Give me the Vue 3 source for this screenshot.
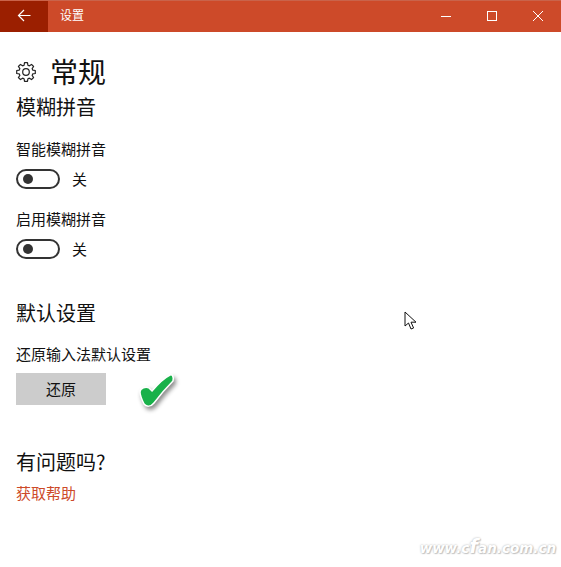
<template>
  <div class="window">
    <!-- title bar -->
    <header class="titlebar">
      <button class="back">
        <svg width="16" height="16" viewBox="0 0 16 16" fill="none" stroke="#fff" stroke-width="1.2">
          <path d="M14.500 7.500H2.500M8 2 2.500 7.500 8 13" />
        </svg>
      </button>
      <span class="title">设置</span>
      <div class="controls">
        <span class="ctl">
          <svg width="12" height="12" viewBox="0 0 12 12"><path d="M1 6.500h10" stroke="#fff" stroke-width="1" /></svg>
        </span>
        <span class="ctl">
          <svg width="12" height="12" viewBox="0 0 12 12"><rect x="1.500" y="1.500" width="9" height="9" fill="none" stroke="#fff" stroke-width="1" /></svg>
        </span>
        <span class="ctl">
          <svg width="12" height="12" viewBox="0 0 12 12"><path d="M1 1l10 10M11 1 1 11" stroke="#fff" stroke-width="1" /></svg>
        </span>
      </div>
    </header>

    <main class="content">
      <div class="page-head">
        <svg class="gear" width="20" height="20" viewBox="0 0 20 20" fill="none" stroke="#222" stroke-width="1.2">
          <path :d="gearPath" stroke-linejoin="round" />
          <circle cx="10" cy="10" r="3.300" />
        </svg>
        <h1>常规</h1>
      </div>

      <h2 class="first">模糊拼音</h2>
      <div v-for="item in toggles" :key="item" class="setting">
        <div class="label">{{ item }}</div>
        <div class="toggle-row">
          <span class="toggle"><i></i></span>
          <span class="state">关</span>
        </div>
      </div>

      <h2 class="defaults">默认设置</h2>
      <div class="label reset-label">还原输入法默认设置</div>
      <button class="reset">还原</button>

      <h2 class="help">有问题吗?</h2>
      <a class="link">获取帮助</a>
    </main>

    <!-- annotations on top of the screenshot -->
    <svg class="check" width="40" height="40" viewBox="0 0 40 40">
      <path d="M3 20C3 16 9 14 12 16L15 19C20 13 27 6 33 3 35 2 37 4 36 9 30 15 23 23 17 31 14 35 9 35 7 32 5 28 3 24 3 20Z" fill="#19b14a" stroke="#fff" stroke-width="1.500" />
    </svg>
    <svg class="cursor" width="14" height="20" viewBox="0 0 14 20">
      <path d="M1 1v14l3.500-3 2.500 6 2.600-1-2.600-5.800h5z" fill="#fff" stroke="#111" stroke-width="1" />
    </svg>
    <div class="watermark">www.c<span>f</span>an.com.cn</div>
  </div>
</template>

<script setup>
const toggles = ["智能模糊拼音", "启用模糊拼音"];

// 8-tooth gear outline
const gearPath = (() => {
  const pts = [];
  for (let i = 0; i < 8; i++) {
    const a = (i * Math.PI) / 4 - Math.PI / 2;
    const step = Math.PI / 4;
    const p = (r, t) => `${(10 + r * Math.cos(t)).toFixed(2)} ${(10 + r * Math.sin(t)).toFixed(2)}`;
    pts.push(`${i ? "L" : "M"}${p(9.4, a - step * 0.2)}`);
    pts.push(`L${p(9.4, a + step * 0.2)}`);
    pts.push(`L${p(7, a + step * 0.36)}`);
    pts.push(`L${p(7, a + step * 0.64)}`);
  }
  return pts.join(" ") + "Z";
})();
</script>

<style>
html,
body {
  margin: 0;
  background: #fff;
}
</style>

<style scoped>
.window {
  position: relative;
  width: 561px;
  height: 567px;
  overflow: hidden;
  background: #fff;
  color: #111;
  font-family: "Noto Sans CJK SC", "Liberation Sans", sans-serif;
}

.titlebar {
  display: flex;
  align-items: center;
  height: 32px;
  box-sizing: border-box;
  border-top: 1px solid #c9634a;
  background: #cd4a29;
  color: #fff;
}

.back {
  display: flex;
  align-items: center;
  justify-content: center;
  width: 48px;
  height: 31px;
  padding: 0 0 1px;
  border: 0;
  background: #9b1f00;
}

.title {
  margin-left: 12px;
  margin-bottom: 4px;
  font-size: 12px;
}

.controls {
  display: flex;
  margin-left: auto;
}

.ctl {
  display: flex;
  align-items: center;
  justify-content: center;
  width: 46px;
  height: 30px;
  margin-bottom: 1px;
}

.content {
  padding: 0 16px;
}

.page-head {
  display: flex;
  align-items: center;
  height: 40px;
  margin-top: 20px;
}

.gear {
  margin-right: 14px;
}

h1 {
  margin: 0 0 2px;
  font-size: 28px;
  font-weight: 400;
  line-height: 38px;
}

h2 {
  margin: 0;
  font-size: 20px;
  font-weight: 400;
  line-height: 28px;
}

.first {
  margin-top: 1px;
}

.setting {
  margin-top: 20px;
}

.first + .setting {
  margin-top: 18px;
}

.label {
  font-size: 15px;
  line-height: 20px;
}

.toggle-row {
  display: flex;
  align-items: center;
  height: 20px;
  margin-top: 10px;
}

.toggle {
  display: flex;
  align-items: center;
  box-sizing: border-box;
  width: 44px;
  height: 20px;
  padding-left: 5px;
  border: 2px solid #333;
  border-radius: 10px;
}

.toggle i {
  width: 10px;
  height: 10px;
  border-radius: 50%;
  background: #333;
}

.state {
  margin-left: 12px;
  margin-bottom: 2px;
  font-size: 15px;
}

.defaults {
  margin-top: 40px;
}

.reset-label {
  margin-top: 17px;
}

.reset {
  display: block;
  width: 90px;
  height: 32px;
  margin-top: 9px;
  padding: 0 0 2px;
  border: 0;
  background: #ccc;
  color: #111;
  font: inherit;
  font-size: 15px;
}

.help {
  margin-top: 43px;
}

.link {
  display: block;
  margin-top: 7px;
  color: #cd4a29;
  font-size: 15px;
  line-height: 20px;
}

.check {
  position: absolute;
  left: 137px;
  top: 372px;
  filter: drop-shadow(2px 3px 2px rgba(0, 0, 0, 0.45));
}

.cursor {
  position: absolute;
  left: 404px;
  top: 311px;
}

.watermark {
  position: absolute;
  right: 5px;
  bottom: 10px;
  color: #fff;
  font-family: "DejaVu Sans", sans-serif;
  font-size: 13.500px;
  font-style: italic;
  font-weight: 700;
  line-height: 18px;
  text-shadow: 0 0 2px #aaa, 1px 1px 1px #ccc;
}

.watermark span {
  font-size: 20px;
  line-height: 18px;
}
</style>
